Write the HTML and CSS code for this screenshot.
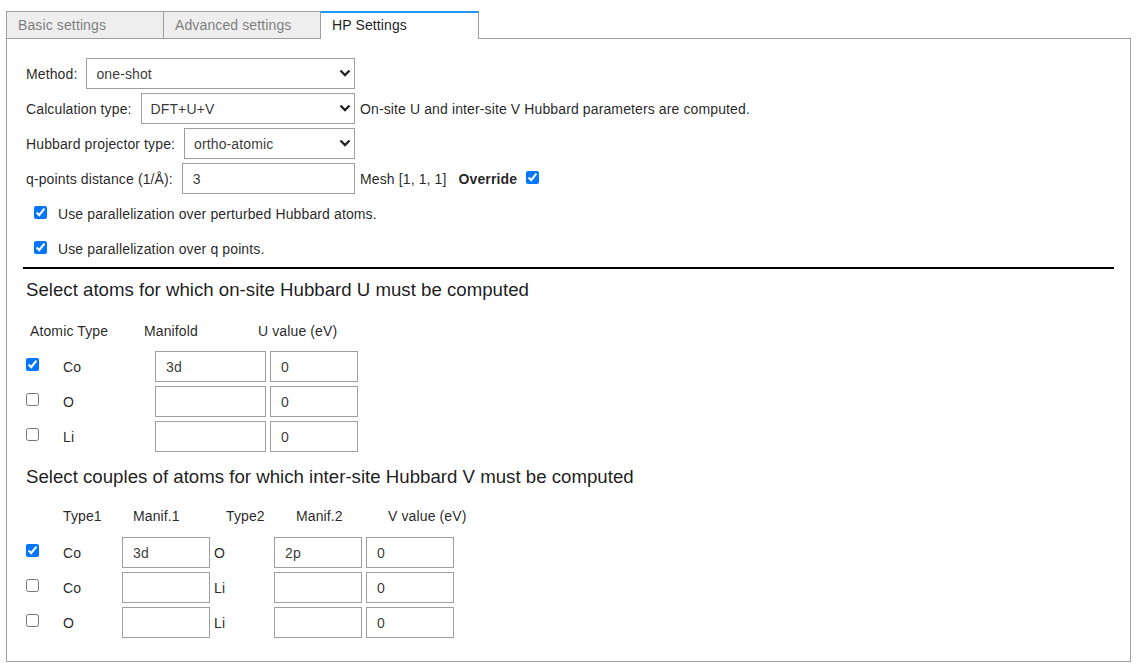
FILE: index.html
```html
<!DOCTYPE html>
<html>
<head>
<meta charset="utf-8">
<link rel="stylesheet" href="styles.css">
</head>
<body>
<div class="tabs">
  <div class="tabbar">
    <div class="tab">Basic settings</div>
    <div class="tab">Advanced settings</div>
    <div class="tab active">HP Settings</div>
  </div>
  <div class="panel">
    <div class="form">
      <div class="row">
        <div class="field">
          <label class="lbl">Method:</label>
          <div class="sel"><select><option>one-shot</option></select><svg class="chev" width="12" height="8" viewBox="0 0 12 8"><polyline points="1.5,1.5 6,6 10.5,1.5" fill="none" stroke="#222" stroke-width="2.3"/></svg></div>
        </div>
      </div>
      <div class="row">
        <div class="field">
          <label class="lbl">Calculation type:</label>
          <div class="sel"><select><option>DFT+U+V</option></select><svg class="chev" width="12" height="8" viewBox="0 0 12 8"><polyline points="1.5,1.5 6,6 10.5,1.5" fill="none" stroke="#222" stroke-width="2.3"/></svg></div>
        </div>
        <span class="note">On-site U and inter-site V Hubbard parameters are computed.</span>
      </div>
      <div class="row">
        <div class="field">
          <label class="lbl">Hubbard projector type:</label>
          <div class="sel"><select><option>ortho-atomic</option></select><svg class="chev" width="12" height="8" viewBox="0 0 12 8"><polyline points="1.5,1.5 6,6 10.5,1.5" fill="none" stroke="#222" stroke-width="2.3"/></svg></div>
        </div>
      </div>
      <div class="row">
        <div class="field">
          <label class="lbl">q-points distance (1/Å):</label>
          <input class="txt grow" type="text" value="3">
        </div>
        <span class="note">Mesh [1, 1, 1]</span>
        <span class="bold">Override</span>
        <input class="cb" type="checkbox" checked>
      </div>
      <div class="row check-row">
        <input class="cb" type="checkbox" checked>
        <span class="cb-text">Use parallelization over perturbed Hubbard atoms.</span>
      </div>
      <div class="row check-row">
        <input class="cb" type="checkbox" checked>
        <span class="cb-text">Use parallelization over q points.</span>
      </div>
    </div>

    <div class="rule"></div>

    <h2 class="heading h-u">Select atoms for which on-site Hubbard U must be computed</h2>

    <div class="thead t1-head">
      <span class="c-at">Atomic Type</span>
      <span class="c-man">Manifold</span>
      <span>U value (eV)</span>
    </div>
    <div class="tbody t1-body">
      <div class="trow">
        <input class="cb" type="checkbox" checked>
        <span class="t1-name">Co</span>
        <input class="txt w111" type="text" value="3d">
        <input class="txt w88 gap4" type="text" value="0">
      </div>
      <div class="trow">
        <input class="cb" type="checkbox">
        <span class="t1-name">O</span>
        <input class="txt w111" type="text" value="">
        <input class="txt w88 gap4" type="text" value="0">
      </div>
      <div class="trow">
        <input class="cb" type="checkbox">
        <span class="t1-name">Li</span>
        <input class="txt w111" type="text" value="">
        <input class="txt w88 gap4" type="text" value="0">
      </div>
    </div>

    <h2 class="heading h-v">Select couples of atoms for which inter-site Hubbard V must be computed</h2>

    <div class="thead t2-head">
      <span class="c-t1">Type1</span>
      <span class="c-m1">Manif.1</span>
      <span class="c-t2">Type2</span>
      <span class="c-m2">Manif.2</span>
      <span>V value (eV)</span>
    </div>
    <div class="tbody t2-body">
      <div class="trow">
        <input class="cb" type="checkbox" checked>
        <span class="t2-name">Co</span>
        <input class="txt w88" type="text" value="3d">
        <span class="t2-name2">O</span>
        <input class="txt w88" type="text" value="2p">
        <input class="txt w88 gap4" type="text" value="0">
      </div>
      <div class="trow">
        <input class="cb" type="checkbox">
        <span class="t2-name">Co</span>
        <input class="txt w88" type="text" value="">
        <span class="t2-name2">Li</span>
        <input class="txt w88" type="text" value="">
        <input class="txt w88 gap4" type="text" value="0">
      </div>
      <div class="trow">
        <input class="cb" type="checkbox">
        <span class="t2-name">O</span>
        <input class="txt w88" type="text" value="">
        <span class="t2-name2">Li</span>
        <input class="txt w88" type="text" value="">
        <input class="txt w88 gap4" type="text" value="0">
      </div>
    </div>
  </div>
</div>
</body>
</html>
```

FILE: styles.css
```css
* { box-sizing: border-box; }

body {
  margin: 0;
  background: #fff;
  font-family: "Liberation Sans", Arial, sans-serif;
  font-size: 14px;
  letter-spacing: 0.12px;
  color: rgba(0, 0, 0, 0.87);
}

.tabs {
  margin: 11px 0 0 6px;
  width: 1125px;
}

.tabbar {
  display: flex;
  height: 27px;
  position: relative;
  z-index: 1;
}

.tab {
  width: 158px;
  height: 27px;
  margin-left: -1px;
  border: 1px solid #9e9e9e;
  border-bottom: none;
  background: #eeeeee;
  color: rgba(0, 0, 0, 0.5);
  padding-left: 11px;
  line-height: 26px;
  white-space: nowrap;
}

.tab:first-child { margin-left: 0; }

.tab.active {
  width: 159px;
  height: 28px;
  background: #fff;
  color: rgba(0, 0, 0, 0.9);
  border-top: 2px solid #2196f3;
  line-height: 25px;
}

.panel {
  width: 1125px;
  height: 624px;
  border: 1px solid #9e9e9e;
  padding: 19px 16px 0 16px;
}

.form {
  display: flex;
  flex-direction: column;
  gap: 4px;
  padding-left: 3px;
}

.row {
  display: flex;
  align-items: center;
  height: 31px;
}

.field {
  display: flex;
  align-items: center;
  width: 329px;
  height: 31px;
}

.lbl {
  white-space: nowrap;
  margin-right: 9px;
}

.sel {
  position: relative;
  flex: 1;
  height: 31px;
}

.sel select {
  -webkit-appearance: none;
  appearance: none;
  width: 100%;
  height: 31px;
  border: 1px solid #9e9e9e;
  border-radius: 0;
  background: #fff;
  font-family: inherit;
  font-size: 14px;
  letter-spacing: 0.12px;
  color: rgba(0, 0, 0, 0.8);
  padding: 0 0 0 9px;
  margin: 0;
  outline: none;
}

.chev {
  position: absolute;
  right: 4px;
  top: 11px;
  pointer-events: none;
}

.txt {
  height: 31px;
  border: 1px solid #9e9e9e;
  border-radius: 0;
  background: #fff;
  font-family: inherit;
  font-size: 14px;
  letter-spacing: 0.12px;
  color: rgba(0, 0, 0, 0.8);
  padding: 0 0 0 10px;
  margin: 0;
  outline: none;
}

.grow { flex: 1; min-width: 0; }
.w111 { width: 111px; }
.w88 { width: 88px; }
.gap4 { margin-left: 4px; }

.note {
  margin-left: 5px;
  white-space: nowrap;
}

.bold {
  font-weight: bold;
  margin-left: 12px;
}

.cb {
  width: 13px;
  height: 13px;
  margin: 0;
  flex: none;
}

.row > .cb { margin-left: 9px; margin-top: -2px; }

.check-row > .cb { margin-left: 8px; }

.cb-text { margin-left: 11px; }

.rule {
  height: 2px;
  background: #000;
  margin-top: 3px;
}

.heading {
  margin: 0;
  padding-left: 3px;
  font-size: 18.67px;
  letter-spacing: 0;
  font-weight: normal;
  line-height: 22px;
  color: rgba(0, 0, 0, 0.9);
}

.h-u { margin-top: 10px; }
.h-v { margin-top: 14px; }

.thead {
  display: flex;
  align-items: center;
  height: 20px;
  white-space: nowrap;
}

.t1-head { margin-top: 20px; padding-left: 7px; }
.c-at { width: 114px; }
.c-man { width: 114px; }

.t2-head { margin-top: 18px; padding-left: 40px; }
.c-t1 { width: 70px; }
.c-m1 { width: 93px; }
.c-t2 { width: 70px; }
.c-m2 { width: 92px; }

.tbody {
  display: flex;
  flex-direction: column;
  gap: 4px;
  padding-left: 3px;
}

.t1-body { margin-top: 10px; }
.t2-body { margin-top: 11px; }

.trow {
  display: flex;
  align-items: center;
  height: 31px;
}

.trow > .cb {
  align-self: flex-start;
  margin-top: 7px;
  margin-right: 24px;
}

.t1-name { width: 92px; }
.t2-name { width: 59px; }
.t2-name2 { width: 64px; padding-left: 4px; }
```
